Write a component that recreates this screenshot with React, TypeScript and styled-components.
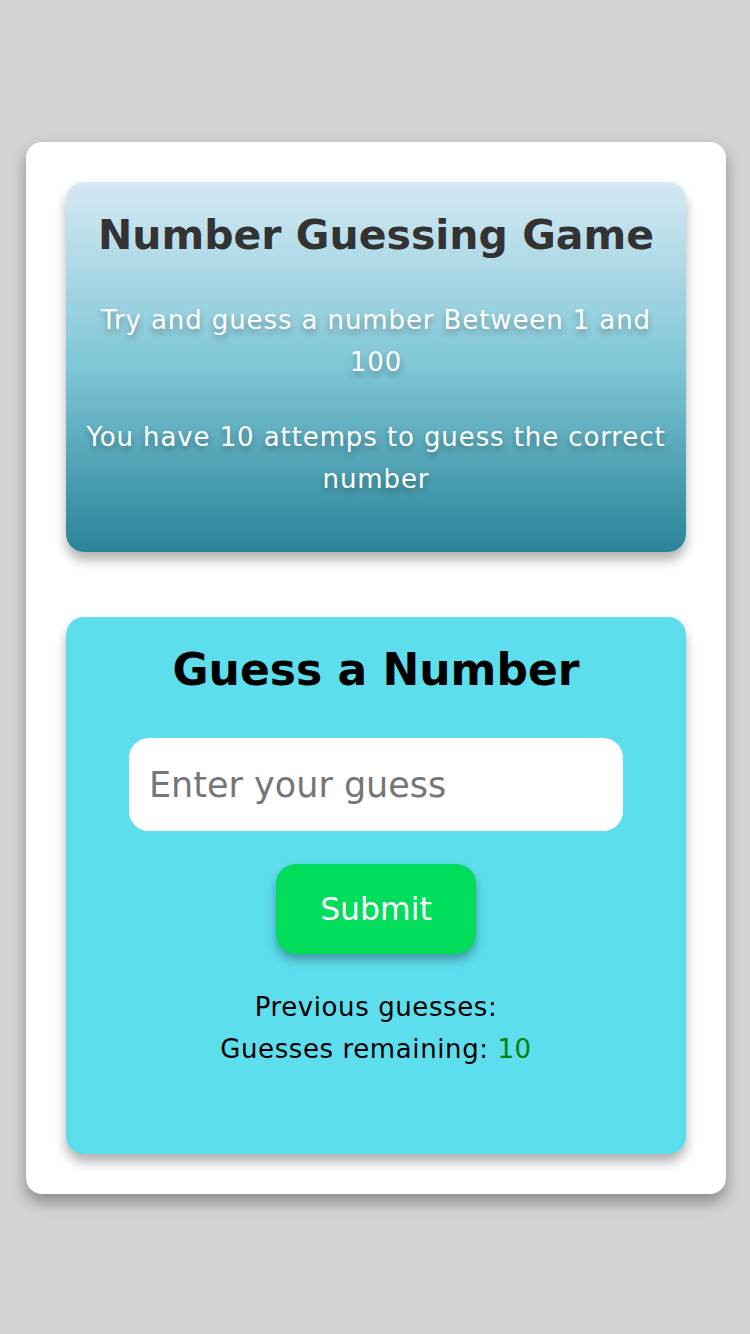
import { useState } from 'react';
import styled, { createGlobalStyle } from 'styled-components';

const GlobalStyle = createGlobalStyle`
	html, body {
		margin: 0;
		padding: 0;
		background-color: #d3d3d3;
		font-family: 'DejaVu Sans', 'Open Sans', sans-serif;
	}
`;

const Page = styled.div`
	min-height: 1334px;
	box-sizing: border-box;
	padding: 142px 25px 0 26px;
`;

const Container = styled.div`
	width: 700px;
	box-sizing: border-box;
	background-color: #fff;
	border-radius: 16px;
	box-shadow: rgba(0, 0, 0, 0.35) 0px 8px 15px;
	padding: 40px 40px 40px;
	display: flex;
	flex-direction: column;
	gap: 65px;
`;

const IntroCard = styled.div`
	height: 370px;
	box-sizing: border-box;
	border-radius: 18px;
	background: linear-gradient(#d5e9f3, #7ec6d6 50%, #2a8498);
	box-shadow: rgba(0, 0, 0, 0.3) 0px 8px 12px;
	padding: 22px 18px 0;
	text-align: center;
`;

const Title = styled.h1`
	margin: 0 0 33px;
	font-size: 41px;
	font-weight: 700;
	line-height: 62px;
	color: #333;
`;

const Info = styled.p`
	margin: 0 0 33px;
	font-size: 26px;
	letter-spacing: 0.9px;
	line-height: 42px;
	color: #fff;
	text-shadow: rgba(0, 0, 0, 0.3) 0px 4px 6px;
`;

const GameCard = styled.div`
	height: 537px;
	box-sizing: border-box;
	border-radius: 18px;
	background-color: #5ddeed;
	box-shadow: rgba(0, 0, 0, 0.3) 0px 8px 12px;
	padding: 24px 62px 0;
	display: flex;
	flex-direction: column;
	align-items: center;
`;

const GameTitle = styled.h2`
	margin: 0 0 39px;
	font-size: 44px;
	font-weight: 700;
	line-height: 58px;
	color: #000;
`;

const GuessInput = styled.input`
	width: 494px;
	height: 93px;
	box-sizing: border-box;
	border: none;
	outline: none;
	border-radius: 20px;
	padding: 0 20px;
	font-family: inherit;
	font-size: 35px;
	color: #333;
	background: #fff;

	&::placeholder {
		color: #767676;
	}
`;

const SubmitButton = styled.button`
	margin-top: 33px;
	width: 200px;
	height: 90px;
	border: none;
	border-radius: 20px;
	background-color: #00dd5a;
	color: #fff;
	font-family: inherit;
	font-size: 31.5px;
	box-shadow: rgba(0, 0, 0, 0.3) 0px 6px 10px;
	cursor: pointer;
`;

const Stats = styled.div`
	margin-top: 32px;
	text-align: center;
	font-size: 26px;
	letter-spacing: 0.6px;
	line-height: 42px;
	color: #000;
`;

const Remaining = styled.span`
	color: #008000;
`;

const App = () => {
	const [guess, setGuess] = useState('');
	const [previous, setPrevious] = useState<number[]>([]);
	const remaining = 10 - previous.length;

	const handleSubmit = () => {
		const n = Number(guess);
		if (!guess || Number.isNaN(n) || remaining <= 0) return;
		setPrevious([...previous, n]);
		setGuess('');
	};

	return (
		<Page>
			<GlobalStyle />
			<Container>
				<IntroCard>
					<Title>Number Guessing Game</Title>
					<Info>Try and guess a number Between 1 and 100</Info>
					<Info>You have 10 attemps to guess the correct number</Info>
				</IntroCard>
				<GameCard>
					<GameTitle>Guess a Number</GameTitle>
					<GuessInput
						type='text'
						placeholder='Enter your guess'
						value={guess}
						onChange={(e) => setGuess(e.target.value)}
					/>
					<SubmitButton type='button' onClick={handleSubmit}>
						Submit
					</SubmitButton>
					<Stats>
						<div>Previous guesses: {previous.join(' ')}</div>
						<div>
							Guesses remaining: <Remaining>{remaining}</Remaining>
						</div>
					</Stats>
				</GameCard>
			</Container>
		</Page>
	);
};

export default App;
